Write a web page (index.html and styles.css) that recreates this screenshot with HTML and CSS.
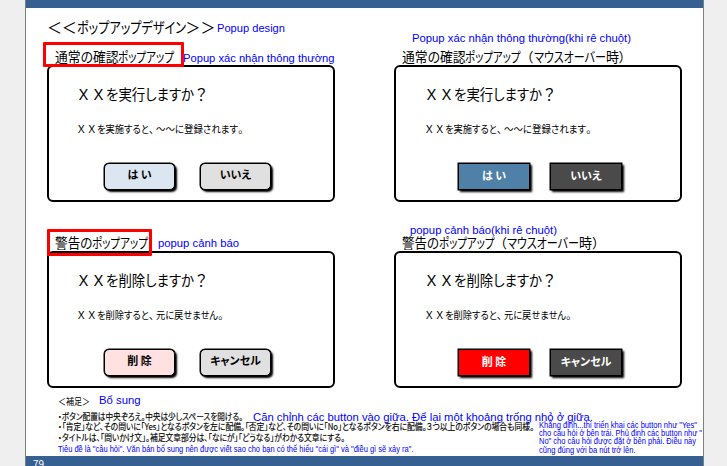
FILE: index.html
```
<!DOCTYPE html>
<html lang="ja">
<head>
<meta charset="utf-8">
<title>ポップアップデザイン</title>
<link rel="stylesheet" href="styles.css">
</head>
<body>
<main class="page">
  <header class="bar"></header>
  <h1 class="title"><span class="full">＜＜</span><span data-w="109">ポップアップデザイン</span><span class="full">＞＞</span><span class="vi" data-w="68">Popup design</span></h1>
  <div class="grid">
    <section class="sample">
      <h2 class="label"><span data-w="63.5">通常の確認</span><span data-w="56">ポップアップ</span></h2>
      <span class="mark mark-normal"></span>
      <span class="note n1" data-w="151.5">Popup xác nhận thông thường</span>
      <div class="popup">
        <p class="question"><span class="full">ＸＸ</span><span data-w="88">を実行しますか</span><span class="full">？</span></p>
        <p class="detail"><span class="full">ＸＸ</span><span data-w="52">を実施すると</span><span class="comma">、</span><span data-w="82">～～に登録されます</span><span class="full">。</span></p>
        <div class="actions"><span class="btn yes">は い</span><span class="btn no">いいえ</span></div>
      </div>
    </section>
    <section class="sample hover">
      <h2 class="label"><span data-w="63.5">通常の確認</span><span data-w="55.5">ポップアップ</span><span class="full">（</span><span data-w="72">マウスオーバー</span><span data-w="13">時</span><span class="full">）</span></h2>
      <span class="note n2" data-w="219">Popup xác nhận thông thường(khi rê chuột)</span>
      <div class="popup">
        <p class="question"><span class="full">ＸＸ</span><span data-w="88">を実行しますか</span><span class="full">？</span></p>
        <p class="detail"><span class="full">ＸＸ</span><span data-w="52">を実施すると</span><span class="comma">、</span><span data-w="82">～～に登録されます</span><span class="full">。</span></p>
        <div class="actions"><span class="btn yes">は い</span><span class="btn no">いいえ</span></div>
      </div>
    </section>
    <section class="sample">
      <h2 class="label"><span data-w="37.5">警告の</span><span data-w="56">ポップアップ</span></h2>
      <span class="mark mark-warning"></span>
      <span class="note n3" data-w="81">popup cảnh báo</span>
      <div class="popup">
        <p class="question"><span class="full">ＸＸ</span><span data-w="88">を削除しますか</span><span class="full">？</span></p>
        <p class="detail"><span class="full">ＸＸ</span><span data-w="52">を削除すると</span><span class="comma">、</span><span data-w="62">元に戻せません</span><span class="full">。</span></p>
        <div class="actions"><span class="btn delete">削 除</span><span class="btn no">キャンセル</span></div>
      </div>
    </section>
    <section class="sample hover">
      <h2 class="label"><span data-w="37">警告の</span><span data-w="55.5">ポップアップ</span><span class="full">（</span><span data-w="72">マウスオーバー</span><span data-w="13">時</span><span class="full">）</span></h2>
      <span class="note n4" data-w="147">popup cảnh báo(khi rê chuột)</span>
      <div class="popup">
        <p class="question"><span class="full">ＸＸ</span><span data-w="88">を削除しますか</span><span class="full">？</span></p>
        <p class="detail"><span class="full">ＸＸ</span><span data-w="52">を削除すると</span><span class="comma">、</span><span data-w="62">元に戻せません</span><span class="full">。</span></p>
        <div class="actions"><span class="btn delete">削 除</span><span class="btn no">キャンセル</span></div>
      </div>
    </section>
  </div>
  <section class="notes">
    <h3 class="notes-title"><span class="jp" data-w="32">＜補足＞</span><span class="vi" data-w="41.5">Bổ sung</span></h3>
    <p class="line"><span data-w="185">・ボタン配置は中央ぞろえ。中央は少しスペースを開ける。</span><span class="vi big" data-w="340">Căn chỉnh các button vào giữa. Để lại một khoảng trống nhỏ ở giữa.</span></p>
    <p class="line"><span data-w="476">・「肯定」など、その問いに「Yes」となるボタンを左に配備。「否定」など、その問いに「No」となるボタンを右に配備。３つ以上のボタンの場合も同様。</span></p>
    <p class="line"><span data-w="287">・タイトルは、「問いかけ文」。補足文章部分は、「なにが」「どうなる」がわかる文章にする。</span></p>
    <p class="small"><span data-w="355.5">Tiêu đề là "câu hỏi". Văn bản bổ sung nên được viết sao cho bạn có thể hiểu "cái gì" và "điều gì sẽ xảy ra".</span></p>
    <div class="side">
      <p><span data-w="158">Khẳng định...thì triển khai các button như "Yes"</span></p>
      <p><span data-w="163">cho câu hỏi ở bên trái. Phủ định các button như "</span></p>
      <p><span data-w="157">No" cho câu hỏi được đặt ở bên phải. Điều này</span></p>
      <p><span data-w="96.5">cũng đúng với ba nút trở lên.</span></p>
    </div>
  </section>
  <footer class="bar foot"><span>79</span></footer>
</main>
<script src="fit.js"></script>
</body>
</html>
```
FILE: styles.css
```
* { box-sizing: border-box; margin: 0; padding: 0; }
body {
  width: 727px; height: 466px; overflow: hidden;
  background: #efefef; color: #000;
  font-family: "Noto Sans CJK JP", sans-serif;
  font-feature-settings: "palt";
}
h1, h2, h3 { font-weight: 400; }
[data-w] { display: inline-block; transform-origin: 0 50%; flex: none; }
.full, .comma { font-feature-settings: normal; flex: none; }
.page {
  width: 679px; height: 466px; margin-left: 25px;
  background: #fff; border: solid #7f7f7f; border-width: 0 1px;
  display: flex; flex-direction: column;
  white-space: nowrap;
}
.bar { height: 8px; flex: none; background: #376092; }
.vi, .note, .small, .side {
  font-family: "Liberation Sans", sans-serif; color: #0000ff;
}
.title { height: 38px; padding: 0 0 2px 21px; display: flex; align-items: center; font-size: 15px; }
.title .full { letter-spacing: -.2px; }
.title .vi { font-size: 11.2px; margin: 3px 0 0 2px; }
.grid {
  display: grid; grid-template-columns: 288px 288px; column-gap: 59px;
  row-gap: 30px; padding-left: 21px;
}
.sample { position: relative; height: 156px; }
.label { display: flex; height: 19px; line-height: 21px; padding-left: 7.5px; font-size: 13.5px; }
.label .full { font-size: 13px; }
.popup {
  height: 137px; border: 2px solid #000; border-radius: 6px;
  padding: 16px 0 0 27px;
}
.question { display: flex; height: 22px; line-height: 22px; font-size: 15px; }
.detail { display: flex; height: 18px; line-height: 18px; margin-top: 15px; font-size: 10.5px; }
.hover .question, .hover .detail { padding-left: 1px; }
.question .full, .detail .full { letter-spacing: -.1px; }
.comma { width: 7.5px; }
.actions { display: flex; gap: 25px; padding: 25px 0 0 28px; }
.btn {
  width: 71px; height: 27px; border: 1px solid #000; border-radius: 5px;
  font-size: 11px; font-weight: 700; line-height: 21px; text-align: center;
  box-shadow: 0 0 0 .5px #000, 2px 2px 2px 0 #000;
}
.yes { background: #dce6f0; }
.no { background: #e0e0e0; }
.delete { background: #ffe1e1; }
.hover .actions { gap: 20px; padding-left: 35px; }
.hover .btn { width: 72px; border-radius: 0; color: #fff; line-height: 22px; }
.hover .yes { background: #4f81a8; }
.hover .no { background: #4a4a4a; }
.hover .delete { background: #ff0000; }
.mark { position: absolute; border: 3px solid #ff0000; border-radius: 1px; }
.mark-normal { left: -4px; top: -4px; width: 141px; height: 25px; }
.mark-warning { left: 0; top: -3px; width: 105px; height: 27px; }
.note { position: absolute; font-size: 11.2px; line-height: 13px; }
.n1 { left: 135.5px; top: 6px; }
.n2 { left: 18px; top: -14px; }
.n3 { left: 111px; top: 5px; }
.n4 { left: 16px; top: -8px; }
.notes { position: relative; flex: 1; padding: 4px 0 0 32px; }
.notes-title { height: 17px; display: flex; align-items: center; font-size: 9.5px; }
.notes-title .vi { font-size: 11.5px; margin: -1px 0 0 9px; }
.line {
  height: 10.5px; line-height: 10.5px; font-size: 9px; display: flex;
  align-items: center; -webkit-text-stroke: .15px #000;
}
.notes-title + .line { margin-top: 2.5px; }
.big { font-size: 11.3px; margin-left: 10px; -webkit-text-stroke: 0; }
.small { font-size: 9px; line-height: 10px; margin-top: .5px; }
.side { position: absolute; left: 513px; top: 32.5px; font-size: 9px; line-height: 8.4px; }
.side p { height: 8.4px; }
.foot { height: 10px; overflow: hidden; padding-left: 7px; color: #fff; font-size: 10px; line-height: 16px; }
```
FILE: fit.js
```
// Condenses each text run to the width named in its data-w attribute.
document.fonts.ready.then(function () {
  document.querySelectorAll('[data-w]').forEach(function (run) {
    var natural = run.getBoundingClientRect().width;
    var wanted = Number(run.dataset.w);
    run.style.width = wanted + 'px';
    run.style.transform = 'scaleX(' + wanted / natural + ')';
    run.style.transformOrigin = '0 50%';
  });
});
```
